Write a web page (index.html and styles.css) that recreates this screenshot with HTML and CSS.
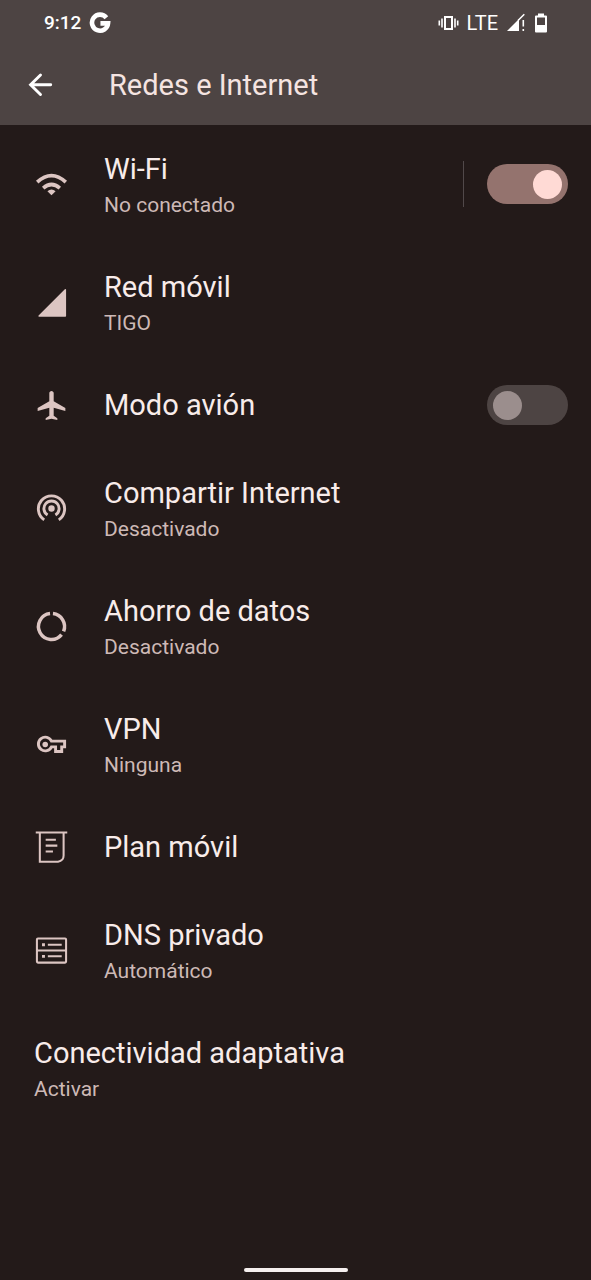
FILE: index.html
```html
<!DOCTYPE html>
<html lang="es">
<head>
<meta charset="utf-8">
<meta name="viewport" content="width=device-width, initial-scale=1">
<title>Redes e Internet</title>
<link rel="stylesheet" href="styles.css">
</head>
<body>
<div class="screen">
  <header class="top">
    <div class="status">
      <div class="status-group">
        <span class="clock">9:12</span>
        <svg class="g-logo" viewBox="0 0 20 20" aria-label="Google"><path d="M15.800 5.200A7.300 7.300 0 1 0 17.300 10.300H10.400" fill="none" stroke="currentColor" stroke-width="4.200"/></svg>
      </div>
      <div class="status-group">
        <svg class="vibrate" viewBox="0 0 21 18"><path fill="none" stroke="currentColor" stroke-width="2" d="M7 3h7v12H7z"/><path fill="none" stroke="currentColor" stroke-width="1.600" d="M4 4.500v9M17 4.500v9M1.300 6.500v5M19.700 6.500v5"/></svg>
        <span class="network">LTE</span>
        <svg class="cell" viewBox="0 0 20 20"><path fill="currentColor" d="M1 18L13 6V18z"/><path fill="none" stroke="currentColor" stroke-width="1.600" d="M12 7.500L18.300 1.200M17.300 7v6.500M17.300 16v2"/></svg>
        <svg class="battery" viewBox="0 0 14 20"><path fill="currentColor" fill-rule="evenodd" d="M4 0.500h6v2h2q1 0 1 1v15q0 1-1 1H2q-1 0-1-1V3.500q0-1 1-1h2zM3 4.500v7.500h8V4.500z"/></svg>
      </div>
    </div>
    <div class="appbar">
      <button class="back" aria-label="Atrás"><svg class="icon" viewBox="0 0 24 24"><path fill="none" stroke="currentColor" stroke-width="2" stroke-linecap="round" d="M19 11.500H5.500M12 4.800L5.200 11.500l6.800 6.700"/></svg></button>
      <h1 class="heading">Redes e Internet</h1>
    </div>
  </header>
  <main class="list">
    <div class="row">
      <svg class="icon" viewBox="0 0 24 24"><path fill="none" stroke="currentColor" stroke-width="2.500" d="M2.200 10.400Q12 1.400 21.800 10.400M6.300 14.500Q12 9.500 17.700 14.500"/><path fill="currentColor" d="M9.200 16.600q2.800-2.200 5.600 0L12 19.400z"/></svg>
      <div class="text two-line"><label class="title" for="wifi">Wi-Fi</label><span class="sub">No conectado</span></div>
      <span class="divider"></span>
      <input class="switch" id="wifi" type="checkbox" role="switch" checked>
    </div>
    <div class="row">
      <svg class="icon" viewBox="0 0 24 24"><path fill="currentColor" stroke="currentColor" stroke-linejoin="round" d="M3.500 21.300H21.500V3.300z"/></svg>
      <div class="text two-line"><span class="title">Red móvil</span><span class="sub">TIGO</span></div>
    </div>
    <div class="row">
      <svg class="icon" viewBox="0 0 24 24"><path fill="currentColor" d="M21.500 15.700v-2L13.500 9V3.500C13.500 2.700 12.800 2 12 2s-1.500.7-1.500 1.500V9l-8 4.700v2l8-2.200V19l-2.500 1.700V22l4-1 4 1v-1.300L13.500 19v-5.500z"/></svg>
      <div class="text"><label class="title" for="plane">Modo avión</label></div>
      <input class="switch" id="plane" type="checkbox" role="switch">
    </div>
    <div class="row">
      <svg class="icon" viewBox="0 0 24 24"><circle cx="12" cy="12" r="2.200" fill="currentColor"/><path fill="none" stroke="currentColor" stroke-width="2" d="M9.300 16.500A5.200 5.200 0 1 1 14.700 16.500M7 19.800A9 9 0 1 1 17 19.800"/></svg>
      <div class="text two-line"><span class="title">Compartir Internet</span><span class="sub">Desactivado</span></div>
    </div>
    <div class="row">
      <svg class="icon" viewBox="0 0 24 24"><path fill="none" stroke="currentColor" stroke-width="2.400" d="M13 3.150A8.900 8.900 0 0 1 20.300 15.300M18.900 17.600A8.900 8.900 0 1 1 11 3.150"/></svg>
      <div class="text two-line"><span class="title">Ahorro de datos</span><span class="sub">Desactivado</span></div>
    </div>
    <div class="row">
      <svg class="icon" viewBox="0 0 24 24"><circle cx="7.700" cy="12" r="1.900" fill="currentColor"/><path fill="none" stroke="currentColor" stroke-width="2" d="M12 9.700H21v3.900h-2v3.200h-4.200v-3.200H12A4.700 4.700 0 1 1 12 9.700z"/></svg>
      <div class="text two-line"><span class="title">VPN</span><span class="sub">Ninguna</span></div>
    </div>
    <div class="row">
      <svg class="icon" viewBox="0 0 24 24"><path fill="none" stroke="currentColor" stroke-width="1.400" d="M1.200 1.700H22.800M4 2V21.700H16.500Q20.300 21.200 20.300 17.500V2M8 6.700h7M8 10.700h8M8 14.700h5"/></svg>
      <div class="text"><span class="title">Plan móvil</span></div>
    </div>
    <div class="row">
      <svg class="icon" viewBox="0 0 24 24"><path fill="none" stroke="currentColor" stroke-width="1.400" d="M2.700 3.700H21.300Q22 3.700 22 4.400V19.600Q22 20.300 21.300 20.300H2.700Q2 20.300 2 19.600V4.400Q2 3.700 2.700 3.700zM2 12H22M9.500 8H19M9.500 16H19"/><path fill="currentColor" d="M5.500 7h2v2h-2zM5.500 15h2v2h-2z"/></svg>
      <div class="text two-line"><span class="title">DNS privado</span><span class="sub">Automático</span></div>
    </div>
    <div class="row">
      <div class="text two-line"><span class="title">Conectividad adaptativa</span><span class="sub">Activar</span></div>
    </div>
  </main>
  <footer class="nav"><span class="handle"></span></footer>
</div>
</body>
</html>
```
FILE: styles.css
```css
* { box-sizing: border-box; }
body {
  margin: 0;
  background: #231a19;
  color: #f8ecea;
  font-family: Roboto, "Noto Sans", sans-serif;
}
.screen { display: flex; flex-direction: column; min-height: 100vh; }
.top { background: #4d4443; }
.status {
  display: flex;
  justify-content: space-between;
  align-items: center;
  height: 45px;
  padding: 0 43px 0 44px;
  color: #fff;
}
.status-group { display: flex; align-items: center; gap: 8px; }
.clock { font-size: 19px; font-weight: 500; }
.network { font-size: 20px; }
.g-logo { width: 22px; height: 22px; }
.vibrate { width: 21px; height: 18px; }
.cell { width: 20px; height: 20px; }
.battery { width: 14px; height: 20px; }
.appbar { display: flex; align-items: center; gap: 51px; height: 80px; padding: 0 23px; }
.back {
  display: flex;
  padding: 0;
  border: 0;
  background: none;
}
.back .icon { color: #fff; }
.heading { margin: 0; font-size: 29px; font-weight: 400; line-height: 38px; color: #f5e4e1; }
.icon { flex: none; width: 35px; height: 35px; color: #dcc5c2; }
.list { flex: 1; }
.row {
  display: flex;
  align-items: center;
  gap: 35px;
  min-height: 88px;
  padding: 21px 23px 21px 34px;
}
.text { display: flex; flex-direction: column; flex: 1; }
.two-line { padding-top: 4px; }
.title { font-size: 29px; line-height: 38px; }
.sub { font-size: 21px; line-height: 34px; color: #cdb9b6; }
.divider { width: 1px; height: 46px; margin-right: -12px; background: #51494a; }
.switch {
  appearance: none;
  display: flex;
  align-items: center;
  flex: none;
  width: 81px;
  height: 40px;
  margin: 0;
  padding: 0 6px;
  border-radius: 20px;
  background: #4d4443;
}
.switch::before {
  content: "";
  width: 29px;
  height: 29px;
  border-radius: 50%;
  background: #9b8e8d;
}
.switch:checked { justify-content: flex-end; background: #94736e; }
.switch:checked::before { background: #ffdad5; }
.nav { display: flex; justify-content: center; padding: 8px; }
.handle { width: 104px; height: 4px; border-radius: 2px; background: #f5efee; }
```
